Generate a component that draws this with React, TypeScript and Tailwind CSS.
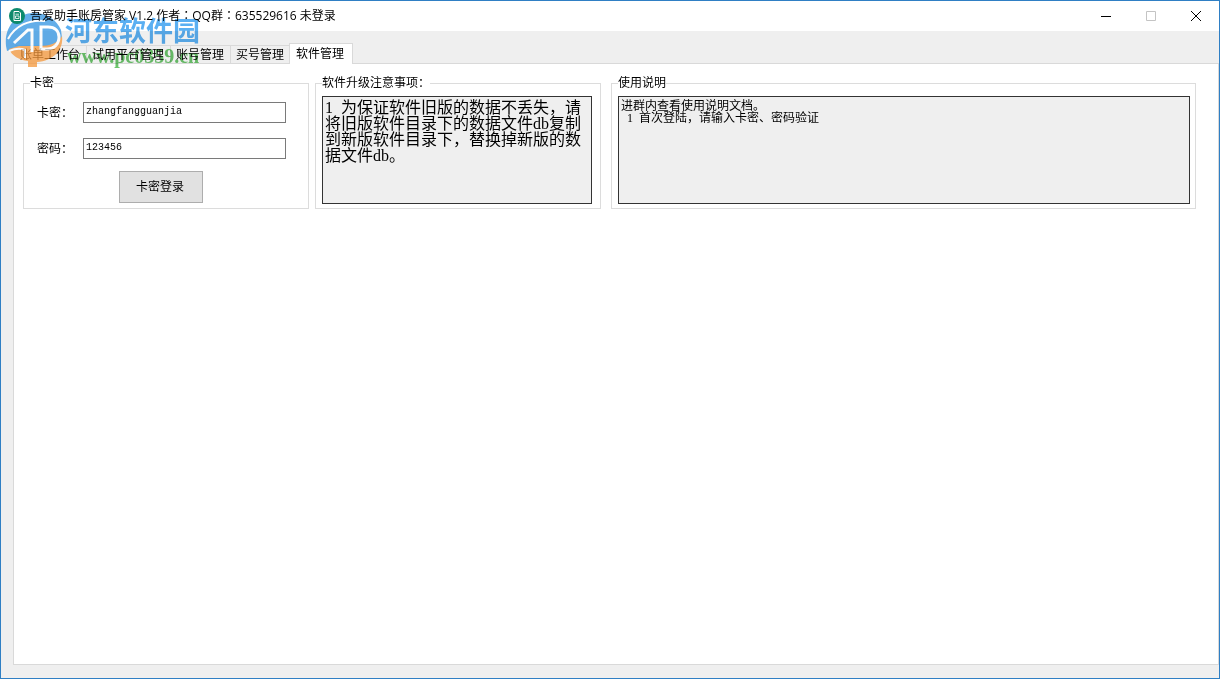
import React, { useState } from 'react';
import { clsx } from 'clsx';

const TABS = ['账单工作台', '试用平台管理', '账号管理', '买号管理', '软件管理'];

// en spaces keep the half-width rhythm of the plain-text notes
const UPGRADE_NOTES =
  '1\u2002为保证软件旧版的数据不丢失，请将旧版软件目录下的数据文件db复制到新版软件目录下，替换掉新版的数据文件db。';

const USAGE_NOTES = '进群内查看使用说明文档。\n\u20021\u2002首次登陆，请输入卡密、密码验证';

function AppIcon() {
  return (
    <svg className="relative z-10 h-4 w-4 shrink-0" viewBox="0 0 16 16" aria-hidden="true">
      <circle cx="8" cy="8" r="8" fill="#0d8a6c" />
      <path d="M5 3.5h5l1.5 1.5v7.5H5z" fill="none" stroke="#fff" />
      <path d="M6.5 6.2h3.5M6.5 8h3.5v2.5H6.5z" fill="none" stroke="#fff" strokeWidth="0.8" />
    </svg>
  );
}

function Watermark() {
  return (
    <>
      <svg
        className="pointer-events-none absolute top-2 left-1 h-15 w-15 opacity-75"
        viewBox="0 0 60 60"
        aria-hidden="true"
      >
        <path d="M1 37C-1 17 12 4 29 4c13 0 23 7 27 17l1 8c-3 4-8 8-14 9H14L2 42z" fill="#2f93e2" />
        <path d="M57 27c2 14-9 25-25 26v5h-9v-6C14 51 7 47 4 40l10-3h20c11 0 19-3 23-10z" fill="#f5973a" />
        {/* white cut-outs that shape the swoosh, the stem and the bowl */}
        <path d="M3 30C10 17 24 10 40 12" fill="none" stroke="#fff" strokeWidth="2" />
        <path d="M9 34 23 21h4v22" fill="none" stroke="#fff" strokeWidth="3" />
        <path d="M36 18v22h6c7 0 12-5 12-12 0-6-4-10-11-10z" fill="none" stroke="#fff" strokeWidth="3" />
        <path d="M4 42c7-3 12-3 16-1v8" fill="none" stroke="#fff" strokeWidth="2" />
      </svg>
      <div
        className="pointer-events-none absolute top-[11px] left-16 flex flex-col whitespace-nowrap mix-blend-multiply"
        aria-hidden="true"
      >
        <span className="font-['Noto_Sans_CJK_SC',sans-serif] text-[27px] leading-9 font-bold text-[#5aaff2]">
          河东软件园
        </span>
        <span className="pl-0.5 font-['Liberation_Serif',serif] text-xl leading-4 font-bold text-[#6cc46c]">
          www.pc0359.cn
        </span>
      </div>
    </>
  );
}

function TitleBar() {
  return (
    <header className="flex h-[30px] shrink-0 items-center bg-white pl-2">
      <AppIcon />
      <h1 className="relative z-10 ml-[5px] flex-1 font-['Open_Sans','Noto_Sans_CJK_TC',sans-serif] text-xs whitespace-nowrap">
        吾爱助手账房管家 V1.2 作者：QQ群：635529616 未登录
      </h1>
      <button aria-label="最小化" className="flex h-full w-[45px] items-center justify-center">
        <svg className="h-3 w-3" viewBox="0 0 12 12" stroke="#000">
          <path d="M1 6.5h10" />
        </svg>
      </button>
      <button aria-label="最大化" disabled className="flex h-full w-[45px] items-center justify-center">
        <svg className="h-3 w-3" viewBox="0 0 12 12" stroke="#c4c4c4" fill="none">
          <path d="M1.5 1.5h9v9h-9z" />
        </svg>
      </button>
      <button aria-label="关闭" className="flex h-full w-[46px] items-center justify-center">
        <svg className="h-3 w-3" viewBox="0 0 12 12" stroke="#000">
          <path d="M1 1l10 10M11 1 1 11" />
        </svg>
      </button>
    </header>
  );
}

interface GroupBoxProps {
  title: string;
  className?: string;
  children: React.ReactNode;
}

function GroupBox({ title, className, children }: GroupBoxProps) {
  return (
    <fieldset className={clsx('h-[134px] min-w-0 border border-[#dcdcdc] pr-[5px] pl-[6px]', className)}>
      <legend className="leading-4">{title}</legend>
      {children}
    </fieldset>
  );
}

interface FieldProps {
  id: string;
  label: string;
  value: string;
  onChange: (value: string) => void;
}

function Field({ id, label, value, onChange }: FieldProps) {
  return (
    <div className="flex items-center">
      <label htmlFor={id} className="w-[46px] whitespace-nowrap">
        {label}
      </label>
      <input
        id={id}
        value={value}
        onChange={(e) => onChange(e.target.value)}
        className="h-[21px] min-w-0 flex-1 border border-[#7a7a7a] bg-white px-[2px] pb-[3px] font-['Liberation_Mono',monospace] text-[10px] outline-none"
      />
    </div>
  );
}

export default function App() {
  const [activeTab, setActiveTab] = useState('软件管理');
  const [card, setCard] = useState('zhangfangguanjia');
  const [password, setPassword] = useState('123456');

  return (
    <div className="relative flex h-screen flex-col border border-[#2f7fc4] bg-[#efefef] font-['Liberation_Serif','Noto_Sans_CJK_SC',serif] text-xs text-black">
      <TitleBar />

      {/* Tabs */}
      <nav className="flex h-8 shrink-0 items-end pl-[14px]">
        {TABS.map((tab) => (
          <button
            key={tab}
            onClick={() => setActiveTab(tab)}
            className={clsx(
              'border border-b-0 border-[#d9d9d9] whitespace-nowrap',
              tab === activeTab
                ? 'relative -mb-px -ml-0.5 bg-white pt-[2px] pr-2 pb-[2px] pl-[6px] leading-4'
                : 'border-l-0 pt-px pr-[6px] pl-[5px] leading-4',
            )}
          >
            {tab}
          </button>
        ))}
      </nav>

      {/* Tab page */}
      <main className="mb-[13px] ml-3 flex flex-1 items-start border border-[#d9d9d9] bg-white pt-[11px] pr-[22px] pl-[9px]">
        <GroupBox title="卡密" className="w-[286px] shrink-0">
          <form className="flex flex-col pt-[11px] pr-[17px] pl-[7px]" onSubmit={(e) => e.preventDefault()}>
            <div className="flex flex-col gap-[15px]">
              <Field id="card" label="卡密：" value={card} onChange={setCard} />
              <Field id="password" label="密码：" value={password} onChange={setPassword} />
            </div>
            <button
              type="submit"
              className="mt-3 ml-[82px] h-8 w-21 border border-[#adadad] bg-[#e1e1e1] pr-[2px]"
            >
              卡密登录
            </button>
          </form>
        </GroupBox>

        <GroupBox title="软件升级注意事项：" className="ml-[6px] w-[286px] shrink-0">
          <textarea
            readOnly
            aria-label="软件升级注意事项"
            value={UPGRADE_NOTES}
            className="mt-[5px] block h-[108px] w-[270px] resize-none border border-[#333] bg-[#efefef] px-[2px] py-[3px] text-base leading-4 outline-none"
          />
        </GroupBox>

        <GroupBox title="使用说明" className="ml-[10px] flex-1">
          <textarea
            readOnly
            aria-label="使用说明"
            value={USAGE_NOTES}
            className="mt-[5px] block h-[108px] w-full resize-none border border-[#333] bg-[#efefef] px-[2px] py-[3px] leading-3 outline-none"
          />
        </GroupBox>
      </main>

      <Watermark />
    </div>
  );
}
